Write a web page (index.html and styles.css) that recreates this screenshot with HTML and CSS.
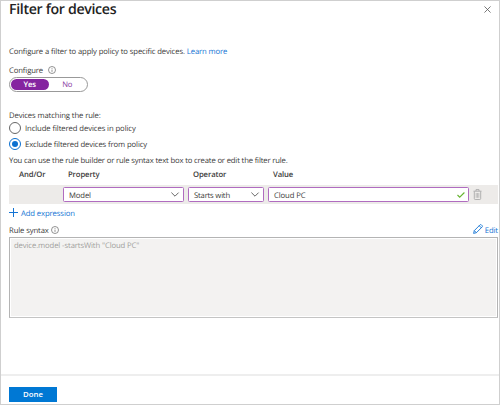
FILE: index.html
```html
<!DOCTYPE html>
<html lang="en">
<head>
<meta charset="utf-8">
<title>Filter for devices</title>
<link rel="stylesheet" href="styles.css">
</head>
<body>
<main class="panel">
  <header class="header">
    <h1>Filter for devices</h1>
    <svg class="close" viewBox="0 0 8 8"><path d="M.5.5l7 7M7.5.5l-7 7"/></svg>
  </header>
  <section class="content">
    <p class="intro"><span>Configure a filter to apply policy to specific devices.</span> <a>Learn more</a></p>
    <div class="label"><span>Configure</span><svg class="info" viewBox="0 0 8 8"><circle cx="4" cy="4" r="3.5"/><path d="M4 3.6v2.3M4 2v.8"/></svg></div>
    <div class="toggle"><span class="yes">Yes</span><span class="no">No</span></div>
    <p class="match"><span>Devices matching the rule:</span></p>
    <label class="radio"><i class="dot"></i><span class="include">Include filtered devices in policy</span></label>
    <label class="radio second"><i class="dot on"></i><span>Exclude filtered devices from policy</span></label>
    <p class="hint"><span>You can use the rule builder or rule syntax text box to create or edit the filter rule.</span></p>
    <div class="grid heads"><b class="h-and">And/Or</b><b>Property</b><b>Operator</b><b>Value</b></div>
    <div class="grid rule">
      <span></span>
      <div class="field"><span>Model</span><svg class="chev" viewBox="0 0 8 5"><path d="M.4.6L4 4.2 7.6.6"/></svg></div>
      <div class="field"><span class="starts">Starts with</span><svg class="chev" viewBox="0 0 8 5"><path d="M.4.6L4 4.2 7.6.6"/></svg></div>
      <div class="field"><span>Cloud PC</span><svg class="check" viewBox="0 0 8 6"><path d="M.5 3l2.2 2.2L7.4.5"/></svg></div>
      <svg class="trash" viewBox="0 0 9 11"><path d="M.5 2.2h8M3 2V.6h3V2M1.3 2.4v7.2q0 .9.9.9h4.6q.9 0 .9-.9V2.4"/><path class="bars" d="M3.2 4v4.8M4.5 4v4.8M5.8 4v4.8"/></svg>
    </div>
    <a class="add"><svg viewBox="0 0 9 9"><path d="M4.5 0v9M0 4.5h9"/></svg><span>Add expression</span></a>
    <div class="syntax"><span>Rule syntax</span><svg class="info" viewBox="0 0 8 8"><circle cx="4" cy="4" r="3.5"/><path d="M4 3.6v2.3M4 2v.8"/></svg>
      <a class="edit"><svg viewBox="0 0 10 10"><path d="M.6 9.4l.7-2.8L7.1.8q.6-.5 1.2 0l.9.9q.5.6 0 1.2L3.4 8.7zM1.3 6.6l2.1 2.1M6.2 1.7l2.1 2.1"/></svg><span>Edit</span></a></div>
    <div class="box"><span>device.model -startsWith "Cloud PC"</span></div>
  </section>
  <footer class="footer"><button>Done</button></footer>
</main>
</body>
</html>
```
FILE: styles.css
```css
* { box-sizing: border-box; }
body { margin: 0; background: #fff; font: 7.7px/14px "Open Sans", "Noto Sans", sans-serif; letter-spacing: -.11px; text-rendering: geometricPrecision; color: #3c3b3a; }
h1, p { margin: 0; }
span, a, b { white-space: nowrap; }
svg { fill: none; stroke: currentColor; flex: none; overflow: visible; }
a { color: #1474d4; }
.panel { width: 500px; height: 405px; border: 1px solid #cfcfcf; display: flex; flex-direction: column; }
.header { height: 44px; padding: 0 8px; display: flex; justify-content: space-between; }
h1 { font-size: 14.2px; line-height: 17px; font-weight: 600; letter-spacing: -.34px; color: #222; }
.close { width: 7px; height: 7px; margin: 5px 0 0; stroke: #555; stroke-width: .9; }
.content { padding: 0 1px 0 8px; height: 329px; display: flex; flex-direction: column; }
.intro { height: 19px; }
.label { height: 13px; display: flex; align-items: flex-start; }
.label .info { margin-left: 5px; }
.label span { width: 34px; }
.info { width: 8px; height: 8px; margin-top: 2px; stroke: #666; stroke-width: .7; }
.toggle { width: 79px; height: 15px; border: 1px solid #999; border-radius: 8px; display: flex; line-height: 13px; text-align: center; padding: 1px; }
.yes { width: 38px; border-radius: 6px; background: #8524a0; color: #fff; font-weight: 600; }
.no { width: 38px; color: #8a3aa3; }
.match { height: 13px; margin-top: 17px; }
.radio { height: 12px; display: flex; align-items: center; gap: 4px; }
.radio span, .field span { padding-top: 2px; }
.include { letter-spacing: -.09px; }
.second { margin-top: 4px; }
.dot { width: 12px; height: 12px; flex: none; border: 1px solid #666; border-radius: 50%; display: grid; place-items: center; }
.on { border-color: #0b70d0; }
.on::after { content: ""; width: 6px; height: 6px; border-radius: 50%; background: #0b70d0; }
.hint { margin-top: 4px; height: 14px; letter-spacing: -.16px; }
.grid { display: grid; grid-template-columns: 50px 121px 76px 201px 9px; column-gap: 4px; width: 489px; }
.heads { height: 17px; }
.heads b { padding-left: 5px; font-weight: 600; }
.heads .h-and { padding-left: 10px; }
.rule { height: 19px; background: #edebe9; align-items: center; }
.field { height: 15px; border: 1px solid #b06cc0; border-radius: 1.5px; background: #fff; display: flex; align-items: center; justify-content: space-between; padding: 0 4px 0 5px; }
.starts { letter-spacing: -.2px; }
.chev { width: 8px; height: 5px; stroke: #555; stroke-width: .9; }
.check { width: 8px; height: 6px; stroke: #65b32e; stroke-width: 1.1; margin-right: -1px; }
.trash { width: 9px; height: 11px; stroke: #aaa; stroke-width: .9; }
.bars { stroke-width: .7; }
.add { height: 17px; padding-top: 3px; display: flex; gap: 3px; align-items: flex-start; }
.add svg { width: 9px; height: 9px; stroke-width: 1; margin-top: 1px; }
.syntax { height: 16px; width: 489px; padding-top: 3px; display: flex; gap: 2px; }
.edit { margin-left: auto; display: flex; gap: 2px; }
.edit svg { width: 10px; height: 10px; stroke-width: .9; }
.box { width: 489px; height: 81px; border: 1px solid #b4b4b4; border-bottom-color: #c4c4c4; background: #f3f2f1; box-shadow: inset 0 0 0 1px #fff; padding: 1px 4px; color: #a19f9d; }
.footer { height: 30px; border-top: 2px solid #eee; padding: 11px 8px 0; }
button { display: block; width: 48px; height: 15px; border: 0; padding: 0; background: #0078d4; color: #fff; font: 600 7.8px/13px "Open Sans", sans-serif; letter-spacing: 0; }
```
